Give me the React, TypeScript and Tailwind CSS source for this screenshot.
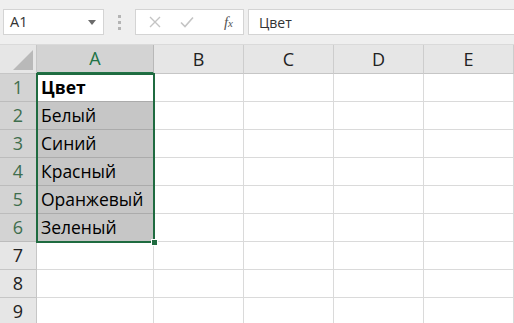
import React from "react";

const cols = ["A", "B", "C", "D", "E"];
const colWidths = ["w-[117px]", "w-[90px]", "w-[90px]", "w-[90px]", "w-[90px]"];
const values = ["Цвет", "Белый", "Синий", "Красный", "Оранжевый", "Зеленый"];
const rows = [1, 2, 3, 4, 5, 6, 7, 8, 9];

export default function App() {
  return (
    <div
      className="w-[514px] h-[323px] overflow-hidden bg-white text-[#1f1f1f]"
      style={{ fontFamily: '"Open Sans", "Noto Sans", sans-serif' }}
    >
      {/* строка формул */}
      <div className="h-[45px] bg-[#efefef] flex items-center pl-[3px] gap-0 border-b border-[#dadada]">
        <div className="w-[101px] h-[26px] bg-white border border-[#d4d4d4] flex items-center justify-between pl-[6px] pr-[7px]">
          <span className="text-[14.5px] text-[#333]">A1</span>
          <svg width="8" height="5" viewBox="0 0 8 5">
            <path d="M0 0 H8 L4 5 Z" fill="#6b6b6b" />
          </svg>
        </div>
        <div className="w-[31px] flex flex-col items-center gap-[3px]">
          <span className="w-[3px] h-[3px] bg-[#b4b4b4]" />
          <span className="w-[3px] h-[3px] bg-[#b4b4b4]" />
          <span className="w-[3px] h-[3px] bg-[#b4b4b4]" />
        </div>
        <div className="w-[109px] h-[26px] bg-white border border-[#d4d4d4] flex items-center pl-[13px] pr-[10px]">
          <svg width="12" height="12" viewBox="0 0 12 12">
            <path d="M1 1 L11 11 M11 1 L1 11" stroke="#c4c4c4" strokeWidth="1.4" />
          </svg>
          <svg className="ml-[19px]" width="14" height="12" viewBox="0 0 14 12">
            <path d="M1 6.5 L5 10.5 L13 1.5" stroke="#c4c4c4" strokeWidth="1.6" fill="none" />
          </svg>
          <span
            className="ml-auto text-[15px] italic text-[#555]"
            style={{ fontFamily: '"Liberation Serif", serif' }}
          >
            f<span className="text-[11px]">x</span>
          </span>
        </div>
        <div className="ml-[4px] flex-1 h-[26px] bg-white border border-[#d4d4d4] border-r-0 flex items-center pl-[10px]">
          <span className="text-[14px] text-[#333]">Цвет</span>
        </div>
      </div>

      {/* сетка */}
      <div className="relative">
        <div className="flex h-[29px] bg-[#e6e6e6]">
          <div className="w-[37px] h-full border-r border-b border-[#c6c6c6] flex items-end justify-end pr-[3px] pb-[3px]">
            <svg width="20" height="20" viewBox="0 0 20 20">
              <path d="M20 0 V20 H0 Z" fill="#b9b9b9" />
            </svg>
          </div>
          {cols.map((c, i) => (
            <div
              key={c}
              className={`${colWidths[i]} h-full flex items-center justify-center text-[18px] border-r ${
                i === 0
                  ? "bg-[#d3d3d3] text-[#217346] border-b-2 border-b-[#217346] border-r-[#b8b8b8]"
                  : "text-[#222] border-b border-b-[#c6c6c6] border-r-[#cdcdcd]"
              }`}
            >
              {c}
            </div>
          ))}
        </div>

        {rows.map((r) => {
          const sel = r <= 6;
          return (
            <div key={r} className="flex h-[28px]">
              <div
                className={`w-[37px] h-full flex items-center justify-center text-[18px] border-r border-b ${
                  sel
                    ? "bg-[#d3d3d3] text-[#3f6e4d] border-b-[#bcbcbc] border-r-[#217346]"
                    : "bg-[#e6e6e6] text-[#222] border-b-[#c6c6c6] border-r-[#c6c6c6]"
                }`}
              >
                {r}
              </div>
              {cols.map((c, i) => {
                const inSel = sel && i === 0;
                const bg = inSel ? (r === 1 ? "bg-white" : "bg-[#c6c6c6]") : "bg-white";
                return (
                  <div
                    key={c}
                    className={`${colWidths[i]} h-full border-r border-b ${bg} ${
                      inSel ? "border-[#ababab]" : "border-[#dadada]"
                    } flex items-center pl-[4px] text-[17.5px] text-black ${
                      r === 1 && i === 0 ? "font-bold" : ""
                    }`}
                  >
                    {i === 0 && sel ? values[r - 1] : ""}
                  </div>
                );
              })}
            </div>
          );
        })}

        {/* рамка выделения */}
        <div className="absolute left-[36px] top-[28px] w-[119px] h-[170px] border-2 border-[#1f6b40] pointer-events-none" />
        <div className="absolute left-[151px] top-[194px] w-[7px] h-[7px] bg-[#1f6b40] border border-white pointer-events-none" />
      </div>
    </div>
  );
}
